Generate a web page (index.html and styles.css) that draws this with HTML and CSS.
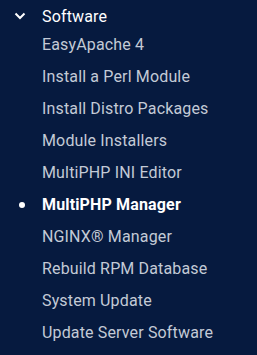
FILE: index.html
```html
<!DOCTYPE html>
<html lang="en">
<head>
    <meta charset="UTF-8">
    <meta name="viewport" content="width=device-width, initial-scale=1.0">
    <title>Software</title>
    <link rel="stylesheet" href="styles.css">
</head>
<body>
    <div class="nav-group">
        <div class="group-header">
            <span class="chevron">
                <svg width="12" height="8" viewBox="0 0 12 8"><path d="M1.5 1.5 L6 6 L10.5 1.5" fill="none" stroke="#fff" stroke-width="2"/></svg>
            </span>
            <span class="group-title">Software</span>
        </div>
        <ul class="nav-list">
            <li class="nav-item">EasyApache 4</li>
            <li class="nav-item">Install a Perl Module</li>
            <li class="nav-item">Install Distro Packages</li>
            <li class="nav-item">Module Installers</li>
            <li class="nav-item">MultiPHP INI Editor</li>
            <li class="nav-item active">MultiPHP Manager</li>
            <li class="nav-item">NGINX® Manager</li>
            <li class="nav-item">Rebuild RPM Database</li>
            <li class="nav-item">System Update</li>
            <li class="nav-item">Update Server Software</li>
        </ul>
    </div>
</body>
</html>
```

FILE: styles.css
```css
* {
    margin: 0;
    padding: 0;
    box-sizing: border-box;
}

body {
    font-family: Roboto, 'Liberation Sans', sans-serif;
    background: #061a3f;
    min-height: 100vh;
    color: #c3cad6;
    font-size: 16px;
    letter-spacing: 0.15px;
}

.group-header {
    display: flex;
    align-items: center;
    height: 32px;
    color: #fff;
}

.chevron {
    width: 42px;
    display: flex;
    padding-left: 14px;
}

.nav-list {
    list-style: none;
    margin-top: -3px;
}

.nav-item {
    position: relative;
    height: 32px;
    line-height: 32px;
    padding-left: 42px;
    white-space: nowrap;
}

.nav-item.active {
    color: #fff;
    font-weight: bold;
}

.nav-item.active::before {
    content: "";
    position: absolute;
    left: 19px;
    top: 13px;
    width: 6px;
    height: 6px;
    border-radius: 50%;
    background: #fff;
}
```
